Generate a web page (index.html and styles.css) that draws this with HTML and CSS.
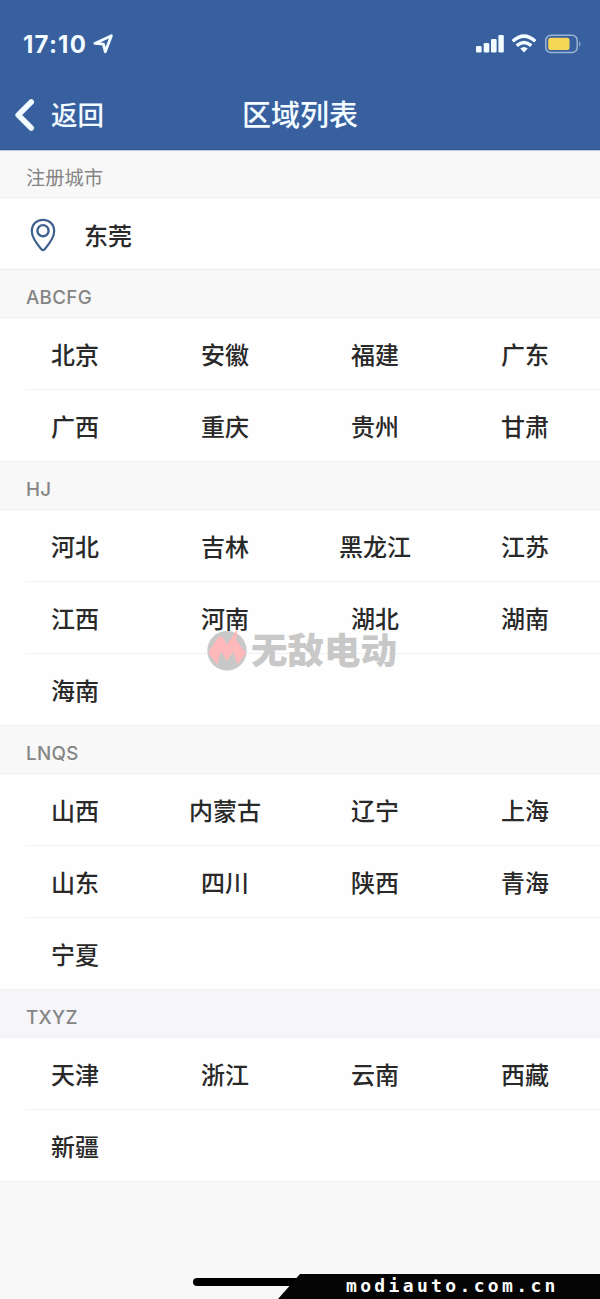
FILE: index.html
```html
<!DOCTYPE html>
<html lang="zh-CN">
<head>
<meta charset="utf-8">
<title>区域列表</title>
<link rel="stylesheet" href="styles.css">
</head>
<body>
<div class="screen">
  <header class="header">
    <div class="status">
      <span class="time">17:10</span>
      <svg class="locate" width="22" height="22" viewBox="0 0 22 22"><path d="M2.8 10.4 19.4 2.8 13.3 18.8 11.4 11.2Z" fill="none" stroke="#f2fbff" stroke-width="2.8" stroke-linejoin="round"/></svg>
      <svg class="signals" width="108" height="24" viewBox="0 0 108 24">
        <g fill="#f2fbff"><rect x="1" y="14" width="5.6" height="6.5" rx="1.3"/><rect x="8.7" y="11" width="5.6" height="9.5" rx="1.3"/><rect x="16" y="7" width="5.6" height="13.5" rx="1.3"/><rect x="23.4" y="3" width="5.4" height="17.5" rx="1.3"/></g>
        <g fill="none" stroke="#f2fbff" stroke-width="3.4"><path d="M37.7 9.2Q49 -1 60.3 9.2"/><path d="M41.7 13.6Q49 7.4 56.3 13.6"/></g>
        <path d="M45.2 16.6Q49 13.6 52.8 16.6L49 20.6Z" fill="#f2fbff"/>
        <rect x="70.8" y="3.2" width="31.4" height="17.2" rx="5" fill="none" stroke="#9cb4d3" stroke-width="1.5"/>
        <rect x="73.2" y="5.8" width="21.3" height="12.2" rx="2.5" fill="#f5d655"/>
        <path d="M104.2 9Q107 11.8 104.2 14.8Z" fill="#9cb4d3"/>
      </svg>
    </div>
    <nav class="nav">
      <div class="back"><svg width="22" height="34" viewBox="0 0 22 34"><path d="M17.2 4 4.2 17 17.2 30" fill="none" stroke="#f2fbff" stroke-width="5.6" stroke-linecap="round" stroke-linejoin="round"/></svg><span>返回</span></div>
      <h1 class="title">区域列表</h1>
    </nav>
  </header>
  <main class="list">
    <h2 class="group">注册城市</h2>
    <div class="current">
      <svg width="26" height="34" viewBox="0 0 26 34"><path d="M13 1.8C6.3 1.8 1.8 6.8 1.8 13 1.8 20.5 8.2 27.5 11.4 31.2Q13 32.8 14.6 31.2C17.8 27.5 24.2 20.5 24.2 13 24.2 6.8 19.7 1.8 13 1.8Z" fill="none" stroke="#3f618f" stroke-width="2.2"/><circle cx="13" cy="12.7" r="5.6" fill="none" stroke="#3f618f" stroke-width="2.4"/></svg>
      <span>东莞</span>
    </div>
    <h2 class="group">ABCFG</h2>
    <div class="row"><span>北京</span><span>安徽</span><span>福建</span><span>广东</span></div>
    <div class="row"><span>广西</span><span>重庆</span><span>贵州</span><span>甘肃</span></div>
    <h2 class="group">HJ</h2>
    <div class="row"><span>河北</span><span>吉林</span><span>黑龙江</span><span>江苏</span></div>
    <div class="row"><span>江西</span><span>河南</span><span>湖北</span><span>湖南</span></div>
    <div class="row"><span>海南</span></div>
    <h2 class="group">LNQS</h2>
    <div class="row"><span>山西</span><span>内蒙古</span><span>辽宁</span><span>上海</span></div>
    <div class="row"><span>山东</span><span>四川</span><span>陕西</span><span>青海</span></div>
    <div class="row"><span>宁夏</span></div>
    <h2 class="group tinted">TXYZ</h2>
    <div class="row"><span>天津</span><span>浙江</span><span>云南</span><span>西藏</span></div>
    <div class="row"><span>新疆</span></div>
  </main>
  <div class="watermark">
    <svg width="42" height="44" viewBox="0 0 42 44"><circle cx="20" cy="23.7" r="19.7" fill="#c8c8c8"/><path d="M1.3 25.7 11.5 9.5H15L20 17.5 30.5 2 29.3 13 39 26 30.5 37.5 26 24.5 20 34 14 24.5 10 37.5Z" fill="#ffb9bb"/></svg>
    <span>无敌电动</span>
  </div>
  <div class="home"></div>
  <div class="site">modiauto.com.cn</div>
</div>
</body>
</html>
```
FILE: styles.css
```css
* { box-sizing: border-box; }
body { margin: 0; font-family: "Liberation Sans", "Noto Sans CJK SC", sans-serif; }
.screen { position: relative; width: 600px; height: 1299px; overflow: hidden; background: #f8f8f8; }
.header { height: 150px; background: #38609f; color: #f2fbff; border-bottom: 1px solid #34568c; }
.status { display: flex; align-items: center; height: 80px; padding: 8px 17px 0 23px; }
.time { width: 65px; padding-top: 1px; font: 700 24px/30px Inter, sans-serif; letter-spacing: 1.2px; white-space: nowrap; }
.locate { margin-left: 4px; }
.signals { margin-left: auto; }
.nav { display: grid; grid-template-columns: 200px 200px 200px; align-items: center; height: 69px; }
.back { display: flex; align-items: center; gap: 15px; padding-left: 14px; font-size: 26.5px; line-height: 38px; font-weight: 500; }
.back span { padding-top: 2px; }
.title { margin: 0; padding-top: 2px; font-size: 29px; line-height: 40px; font-weight: 500; text-align: center; }
.group { height: 48px; margin: 0; padding: 7px 26px 0; border-bottom: 1px solid #f0f0f0; background: #f8f8f8; color: #858585; font: 500 18.8px/42px Inter, "Noto Sans CJK SC", sans-serif; letter-spacing: .3px; }
.group:first-child { box-shadow: inset 0 1px #bccbe0; font-size: 19.3px; font-weight: 400; letter-spacing: 0; }
.group.tinted { background: #f6f6fa; }
.current, .row { height: 72px; background: #fefefe; color: #292929; font-size: 24px; font-weight: 500; line-height: 72px; }
.current { display: flex; align-items: center; gap: 28px; padding-left: 30px; border-bottom: 1px solid #ececec; }
.current svg { margin-top: 3px; }
.current span { height: 72px; padding-top: 3px; }
.row { display: grid; grid-template-columns: repeat(4, 150px); padding-top: 2px; text-align: center; background-image: linear-gradient(#f1f1f1, #f1f1f1); background-size: 574px 1px; background-position: right bottom; background-repeat: no-repeat; }
.row:last-child, .row:has(+ .group) { background-size: 600px 1px; }
.watermark { position: absolute; left: 207px; top: 627px; display: flex; align-items: flex-start; gap: 2px; color: #c8c8c8; font-size: 36.5px; line-height: 44px; font-weight: 900; }
.watermark span { padding-top: 3px; }
.home { position: absolute; left: 193px; top: 1278px; width: 214px; height: 8px; border-radius: 4px; background: #000; }
.site { position: absolute; left: 278px; top: 1274px; width: 322px; height: 25px; padding-left: 68px; background: #050505; clip-path: polygon(22px 0, 100% 0, 100% 100%, 0 100%); color: #fff; font: 700 18px/23px "DejaVu Sans Mono", monospace; letter-spacing: 3.35px; }
```
